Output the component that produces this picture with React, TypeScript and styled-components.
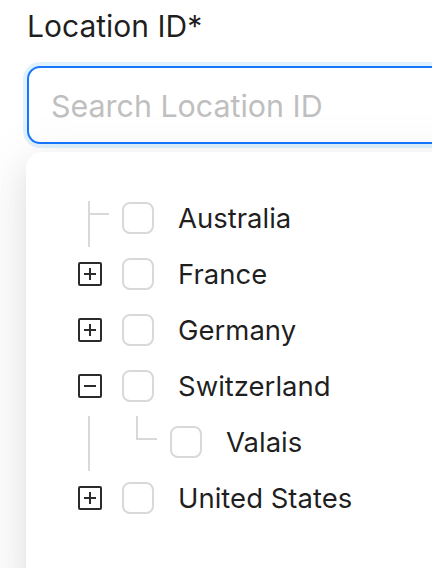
import React from "react";
import styled, { createGlobalStyle } from "styled-components";

const Global = createGlobalStyle`
  html, body { margin: 0; padding: 0; background: #ffffff; overflow: hidden; }
  body { font-family: Inter, "Noto Sans", sans-serif; color: rgba(0,0,0,0.88); }
  * { box-sizing: border-box; }
`;

const Page = styled.div`
  width: 432px;
  height: 568px;
  overflow: hidden;
  padding: 4px 0 0 27px;
`;

const Label = styled.div`
  font-size: 30px;
  line-height: 44px;
  height: 44px;
  color: rgba(0, 0, 0, 0.88);
`;

const SearchBox = styled.div`
  margin-top: 18px;
  width: 460px;
  height: 78px;
  border: 2px solid #1677ff;
  border-radius: 13px;
  box-shadow: 0 0 0 4px rgba(5, 145, 255, 0.12);
  background: #fff;
  display: flex;
  align-items: center;
  padding-left: 22px;
`;

const Placeholder = styled.span`
  font-size: 30.4px;
  color: #bfbfbf;
  margin-top: 2px;
`;

const Dropdown = styled.div`
  margin-top: 8px;
  margin-left: -1px;
  width: 480px;
  height: 440px;
  background: #fff;
  border-radius: 16px;
  box-shadow: 0 12px 32px 0 rgba(0, 0, 0, 0.08), 0 6px 12px -8px rgba(0, 0, 0, 0.12),
    0 18px 56px 16px rgba(0, 0, 0, 0.05);
  padding: 38px 0 0 40px;
`;

const Tree = styled.div`
  display: flex;
  flex-direction: column;
`;

const Row = styled.div`
  display: flex;
  align-items: center;
  height: 56px;
`;

const Cell = styled.div`
  position: relative;
  width: 48px;
  height: 56px;
  flex: none;
  display: flex;
  align-items: center;
  justify-content: center;
`;

const Lines = styled.svg`
  position: absolute;
  left: 0;
  top: 0;
  overflow: visible;
`;

const Switcher = styled.div`
  width: 24px;
  height: 24px;
  border: 2px solid #2b2b2b;
  border-radius: 2px;
  display: flex;
  align-items: center;
  justify-content: center;
`;

const Check = styled.span`
  width: 32px;
  height: 32px;
  margin-left: 8px;
  border: 2px solid #d9d9d9;
  border-radius: 8px;
  background: #fff;
  flex: none;
`;

const Title = styled.span`
  margin-left: 24px;
  font-size: 27.5px;
  line-height: 40px;
  color: rgba(0, 0, 0, 0.88);
  white-space: nowrap;
`;

const LINE = "#d9d9d9";

function Toggle({ open }: { open: boolean }) {
  return (
    <Switcher>
      <svg width="14" height="14" viewBox="0 0 14 14">
        <line x1="1" y1="7" x2="13" y2="7" stroke="#2b2b2b" strokeWidth="2" />
        {!open && <line x1="7" y1="1" x2="7" y2="13" stroke="#2b2b2b" strokeWidth="2" />}
      </svg>
    </Switcher>
  );
}

function LeafTee() {
  return (
    <Cell>
      <Lines width="48" height="56">
        <line x1="23" y1="11" x2="23" y2="57" stroke={LINE} strokeWidth="2" />
        <line x1="23" y1="24" x2="43" y2="24" stroke={LINE} strokeWidth="2" />
      </Lines>
    </Cell>
  );
}

function IndentLine() {
  return (
    <Cell>
      <Lines width="48" height="56">
        <line x1="23" y1="2" x2="23" y2="57" stroke={LINE} strokeWidth="2" />
      </Lines>
    </Cell>
  );
}

function LeafElbow() {
  return (
    <Cell>
      <Lines width="48" height="56">
        <line x1="23" y1="2" x2="23" y2="25" stroke={LINE} strokeWidth="2" />
        <line x1="22" y1="25" x2="43" y2="25" stroke={LINE} strokeWidth="2" />
      </Lines>
    </Cell>
  );
}

type Node = { title: string; kind: "tee" | "closed" | "open" | "child" };

const nodes: Node[] = [
  { title: "Australia", kind: "tee" },
  { title: "France", kind: "closed" },
  { title: "Germany", kind: "closed" },
  { title: "Switzerland", kind: "open" },
  { title: "Valais", kind: "child" },
  { title: "United States", kind: "closed" },
];

export default function App() {
  return (
    <>
      <Global />
      <Page>
        <Label>Location ID*</Label>
        <SearchBox>
          <Placeholder>Search Location ID</Placeholder>
        </SearchBox>
        <Dropdown>
          <Tree>
            {nodes.map((n) => (
              <Row key={n.title}>
                {n.kind === "tee" && <LeafTee />}
                {(n.kind === "closed" || n.kind === "open") && (
                  <Cell>
                    <Toggle open={n.kind === "open"} />
                  </Cell>
                )}
                {n.kind === "child" && (
                  <>
                    <IndentLine />
                    <LeafElbow />
                  </>
                )}
                <Check />
                <Title>{n.title}</Title>
              </Row>
            ))}
          </Tree>
        </Dropdown>
      </Page>
    </>
  );
}
